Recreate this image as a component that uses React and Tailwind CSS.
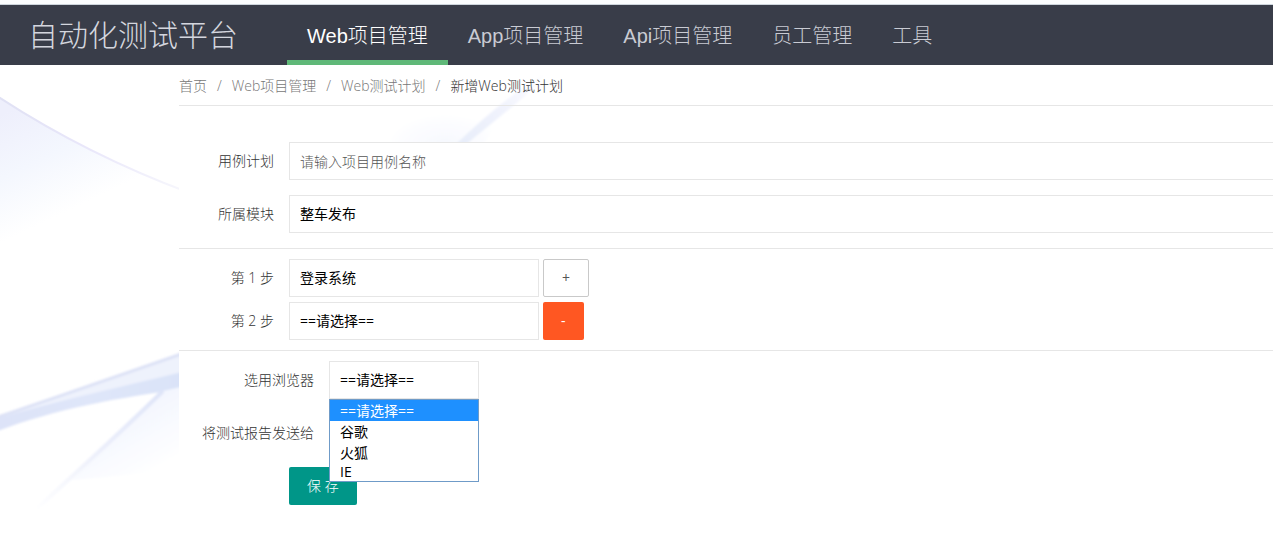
import React from "react";

const NAV = [
  { label: "Web项目管理", active: true },
  { label: "App项目管理" },
  { label: "Api项目管理" },
  { label: "员工管理" },
  { label: "工具" },
];

const CRUMBS = ["首页", "Web项目管理", "Web测试计划"];

const BROWSERS = ["==请选择==", "谷歌", "火狐", "IE"];

const FIELD =
  "h-[38px] appearance-none rounded-none border border-[#e6e6e6] bg-white px-2.5 text-sm text-black outline-none";

const LABEL = "shrink-0 pr-[15px] text-right text-sm font-light text-[#333333]";

function Backdrop() {
  return (
    <svg
      aria-hidden="true"
      className="pointer-events-none absolute left-0 top-[65px] -z-10"
      width="900"
      height="495"
      viewBox="0 65 900 495"
      fill="none"
    >
      <defs>
        <linearGradient id="wing" x1="10" y1="110" x2="60" y2="215" gradientUnits="userSpaceOnUse">
          <stop offset="0" stopColor="#eeeffc" />
          <stop offset="0.5" stopColor="#f4f7fe" />
          <stop offset="1" stopColor="#ffffff" />
        </linearGradient>
        <linearGradient id="wingEdge" x1="0" y1="97" x2="179" y2="192" gradientUnits="userSpaceOnUse">
          <stop offset="0" stopColor="#e0e1f4" />
          <stop offset="0.5" stopColor="#e9e7fa" />
          <stop offset="1" stopColor="#f6f6fc" />
        </linearGradient>
        <linearGradient id="band" x1="0" y1="0" x2="180" y2="0" gradientUnits="userSpaceOnUse">
          <stop offset="0" stopColor="#dde3f8" />
          <stop offset="0.5" stopColor="#dfe6f9" />
          <stop offset="1" stopColor="#dae3f8" />
        </linearGradient>
        <linearGradient id="fan" x1="140" y1="405" x2="172" y2="462" gradientUnits="userSpaceOnUse">
          <stop offset="0" stopColor="#f3f6fe" />
          <stop offset="1" stopColor="#ffffff" />
        </linearGradient>
        <linearGradient id="ray" x1="35" y1="512" x2="165" y2="392" gradientUnits="userSpaceOnUse">
          <stop offset="0" stopColor="#ffffff" />
          <stop offset="0.5" stopColor="#eceffb" />
          <stop offset="1" stopColor="#dee4f8" />
        </linearGradient>
        <linearGradient id="tip" x1="460" y1="142" x2="545" y2="72" gradientUnits="userSpaceOnUse">
          <stop offset="0" stopColor="#e8eefa" />
          <stop offset="0.5" stopColor="#f1f3fd" />
          <stop offset="1" stopColor="#ffffff" />
        </linearGradient>
        <radialGradient id="glow" cx="0" cy="0" r="1" gradientUnits="userSpaceOnUse" gradientTransform="translate(445 145) scale(60 32)">
          <stop offset="0" stopColor="#f6f8fe" />
          <stop offset="1" stopColor="#ffffff" />
        </radialGradient>
        <filter id="soft" x="-10%" y="-10%" width="120%" height="120%">
          <feGaussianBlur stdDeviation="1" />
        </filter>
      </defs>
      <path d="M0 97C55 135 120 168 190 194L185 215C120 225 50 245 0 262Z" fill="url(#wing)" />
      <path d="M-3 96C55 134 120 167 190 193" stroke="url(#wingEdge)" strokeWidth="2" />
      <g filter="url(#soft)">
        <path d="M-5 417C60 396 122 374 190 350L190 380C120 390 60 408 -5 428Z" fill="#eef2fc" />
        <path d="M-5 418C60 396 122 375 190 351" stroke="#dde2f6" strokeWidth="3" />
        <path d="M-5 419C55 401 118 388 190 370L190 388C115 398 55 409 -5 432Z" fill="url(#band)" />
        <path d="M163 391L185 386V470L72 480Z" fill="url(#fan)" />
        <path d="M163 391C125 428 85 465 34 511" stroke="url(#ray)" strokeWidth="4" />
        <path d="M380 150L400 105H510L480 150Z" fill="url(#glow)" />
        <path d="M454 146C482 119 512 93 550 70L524 97L464 146Z" fill="url(#tip)" />
      </g>
    </svg>
  );
}

function Step({ index, value, children }) {
  const id = `step-${index}`;
  return (
    <div className="flex items-center">
      <label htmlFor={id} className={`${LABEL} w-[110px]`}>
        第 {index} 步
      </label>
      <select id={id} className={`${FIELD} w-[250px]`} defaultValue={value}>
        <option>{value}</option>
      </select>
      {children}
    </div>
  );
}

export default function App() {
  return (
    <div className="relative isolate min-h-screen overflow-x-hidden bg-white font-['Open_Sans','Noto_Sans_CJK_SC',sans-serif] text-sm">
      <Backdrop />
      <div className="h-[5px] border-b border-[#cdd5dc] bg-[#fbfdfe]" />
      <header className="flex h-[60px] items-stretch bg-[#393d49] font-['Liberation_Sans','Noto_Sans_CJK_SC',sans-serif] font-light">
        <h1 className="flex w-[287px] shrink-0 items-center whitespace-nowrap pl-7 pt-0.5 text-[30px] text-[#d4d6de]">
          自动化测试平台
        </h1>
        <nav className="flex">
          {NAV.map((item) => (
            <a
              key={item.label}
              href="#"
              className={
                item.active
                  ? "flex items-center whitespace-nowrap border-b-[5px] border-[#5fb878] px-5 pt-[7px] text-xl text-white"
                  : "flex items-center whitespace-nowrap px-5 pt-0.5 text-xl text-[#c9cbd3]"
              }
            >
              {item.label}
            </a>
          ))}
        </nav>
      </header>

      <main className="ml-[179px]">
        <nav
          aria-label="breadcrumb"
          className="flex h-[41px] items-center border-b border-[#e6e6e6] pt-0.5 font-light text-[#777777]"
        >
          {CRUMBS.map((c) => (
            <React.Fragment key={c}>
              <a href="#">{c}</a>
              <span className="mx-2.5">/</span>
            </React.Fragment>
          ))}
          <span className="text-[#333333]">新增Web测试计划</span>
        </nav>

        <form className="mt-9 bg-white" onSubmit={(e) => e.preventDefault()}>
          <div className="flex flex-col gap-[15px] border-b border-[#e6e6e6] pb-[15px]">
            <div className="flex items-center">
              <label htmlFor="plan" className={`${LABEL} w-[110px]`}>
                用例计划
              </label>
              <input
                id="plan"
                type="text"
                placeholder="请输入项目用例名称"
                className={`${FIELD} min-w-0 flex-1 border-r-0 font-light placeholder:text-[#555555]`}
              />
            </div>
            <div className="flex items-center">
              <label htmlFor="module" className={`${LABEL} w-[110px]`}>
                所属模块
              </label>
              <select id="module" className={`${FIELD} min-w-0 flex-1 border-r-0`}>
                <option>整车发布</option>
              </select>
            </div>
          </div>

          <div className="flex flex-col gap-[5px] border-b border-[#e6e6e6] py-2.5">
            <Step index={1} value="登录系统">
              <button
                type="button"
                className="ml-1 h-[38px] rounded-xs border border-[#c9c9c9] bg-white px-[18px] text-[#555555]"
              >
                +
              </button>
            </Step>
            <Step index={2} value="==请选择==">
              <button
                type="button"
                className="ml-1 h-[38px] rounded-xs bg-[#ff5722] px-[18px] text-white"
              >
                -
              </button>
            </Step>
          </div>

          <div className="flex flex-col gap-[15px] pt-2.5">
            <div className="flex items-center">
              <label htmlFor="browser" className={`${LABEL} w-[150px]`}>
                选用浏览器
              </label>
              <div className="relative">
                <select id="browser" className={`${FIELD} block w-[150px]`}>
                  {BROWSERS.map((b) => (
                    <option key={b}>{b}</option>
                  ))}
                </select>
                <ul
                  role="listbox"
                  aria-label="选用浏览器"
                  className="absolute left-0 top-full z-10 w-full border border-[#6f9bc8] bg-white text-black"
                >
                  {BROWSERS.map((b, i) => (
                    <li
                      key={b}
                      role="option"
                      aria-selected={i === 0}
                      className={
                        i === 0
                          ? "bg-[#1e90ff] px-2.5 leading-[21px] text-white"
                          : i === BROWSERS.length - 1
                            ? "px-2.5 leading-[18px]"
                            : "px-2.5 leading-[21px]"
                      }
                    >
                      {b}
                    </li>
                  ))}
                </ul>
              </div>
            </div>
            <div className="flex h-[38px] items-center">
              <span className={`${LABEL} w-[150px]`}>将测试报告发送给</span>
            </div>
            <div className="pl-[110px]">
              <button type="submit" className="h-[38px] rounded-xs bg-[#009688] px-[18px] font-light text-white">
                保 存
              </button>
            </div>
          </div>
        </form>
      </main>
    </div>
  );
}
